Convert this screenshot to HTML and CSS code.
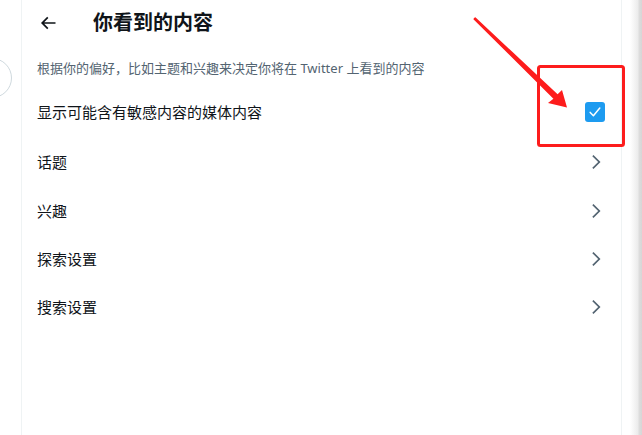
FILE: index.html
```html
<!DOCTYPE html>
<html lang="zh-CN">
<head>
<meta charset="utf-8">
<title>你看到的内容</title>
<link rel="stylesheet" href="styles.css">
</head>
<body>
<div class="page">
  <div class="side">
    <div class="side-circle"></div>
  </div>
  <main class="main">
    <header class="header">
      <span class="back">
        <svg viewBox="0 0 24 24" width="20" height="20"><path d="M7.414 13l5.043 5.04-1.414 1.42L3.586 12l7.457-7.46 1.414 1.42L7.414 11H21v2H7.414z" fill="#0f1419"/></svg>
      </span>
      <h1 class="title">你看到的内容</h1>
    </header>
    <p class="desc">根据你的偏好，比如主题和兴趣来决定你将在 Twitter 上看到的内容</p>
    <ul class="list">
      <li class="row row-first">
        <span class="label">显示可能含有敏感内容的媒体内容</span>
        <span class="check">
          <svg viewBox="0 0 20 20" width="20" height="20"><path d="M5.2 10.4l3.2 3.3 6.4-7.6" fill="none" stroke="#fff" stroke-width="1.5" stroke-linecap="round" stroke-linejoin="round"/></svg>
        </span>
      </li>
      <li class="row row-second">
        <span class="label">话题</span>
        <svg class="chev" viewBox="0 0 24 24" width="20" height="20"><path d="M14.586 12L7.543 4.96l1.414-1.42L17.414 12l-8.457 8.46-1.414-1.42L14.586 12z" fill="#536471"/></svg>
      </li>
      <li class="row">
        <span class="label">兴趣</span>
        <svg class="chev" viewBox="0 0 24 24" width="20" height="20"><path d="M14.586 12L7.543 4.96l1.414-1.42L17.414 12l-8.457 8.46-1.414-1.42L14.586 12z" fill="#536471"/></svg>
      </li>
      <li class="row">
        <span class="label">探索设置</span>
        <svg class="chev" viewBox="0 0 24 24" width="20" height="20"><path d="M14.586 12L7.543 4.96l1.414-1.42L17.414 12l-8.457 8.46-1.414-1.42L14.586 12z" fill="#536471"/></svg>
      </li>
      <li class="row">
        <span class="label">搜索设置</span>
        <svg class="chev" viewBox="0 0 24 24" width="20" height="20"><path d="M14.586 12L7.543 4.96l1.414-1.42L17.414 12l-8.457 8.46-1.414-1.42L14.586 12z" fill="#536471"/></svg>
      </li>
    </ul>
  </main>
  <div class="scroll"></div>
</div>
<svg class="annot" viewBox="0 0 642 435" width="642" height="435">
  <rect x="538.5" y="66.5" width="85" height="79" rx="2" fill="none" stroke="#fd1c1c" stroke-width="3"/>
  <polygon points="474,18 475.4,17.2 557.6,94.3 562,90 567,107.5 548,103 553.4,98.7 473.4,19.2" fill="#fd1c1c"/>
</svg>
</body>
</html>
```

FILE: styles.css
```css
* { box-sizing: border-box; }
html, body {
  margin: 0;
  padding: 0;
  background: #fff;
}
body {
  font-family: "Noto Sans", "Noto Sans CJK SC", sans-serif;
  color: #0f1419;
  position: relative;
  width: 642px;
  height: 435px;
  overflow: hidden;
}
.page {
  display: flex;
  height: 435px;
}
.side {
  width: 21px;
  flex: none;
  overflow: hidden;
}
.side-circle {
  width: 40px;
  height: 40px;
  margin-left: -28px;
  margin-top: 58px;
  border: 1px solid #cfd9de;
  border-radius: 50%;
}
.main {
  width: 601px;
  flex: none;
  border-left: 1px solid #eff3f4;
  border-right: 1px solid #eff3f4;
}
.header {
  height: 45px;
  display: flex;
  align-items: center;
  padding-left: 16px;
}
.back {
  width: 20px;
  height: 20px;
  display: block;
}
.back svg { display: block; }
.title {
  margin: 0 0 0 35px;
  font-size: 20px;
  font-weight: 700;
  line-height: 24px;
}
.desc {
  margin: 0;
  padding: 15px 15px 11px;
  font-size: 13px;
  line-height: 16px;
  color: #536471;
}
.list {
  list-style: none;
  margin: 0;
  padding: 0;
}
.row {
  height: 48px;
  display: flex;
  align-items: center;
  justify-content: space-between;
  padding: 0 15px;
  font-size: 15px;
}
.row-first { height: 50px; }
.row-second { height: 50px; }
.label { line-height: 20px; }
.check {
  width: 20px;
  height: 20px;
  margin-right: 1px;
  background: #1d9bf0;
  border-radius: 3px;
  display: block;
}
.check svg { display: block; }
.chev { display: block; flex: none; }
.scroll {
  flex: 1;
  background: linear-gradient(to right, #fff 0, #fff 8px, #ebebeb 16px, #dddddd 17px, #d6d6d6 20px);
}
.annot {
  position: absolute;
  left: 0;
  top: 0;
  pointer-events: none;
}
```
